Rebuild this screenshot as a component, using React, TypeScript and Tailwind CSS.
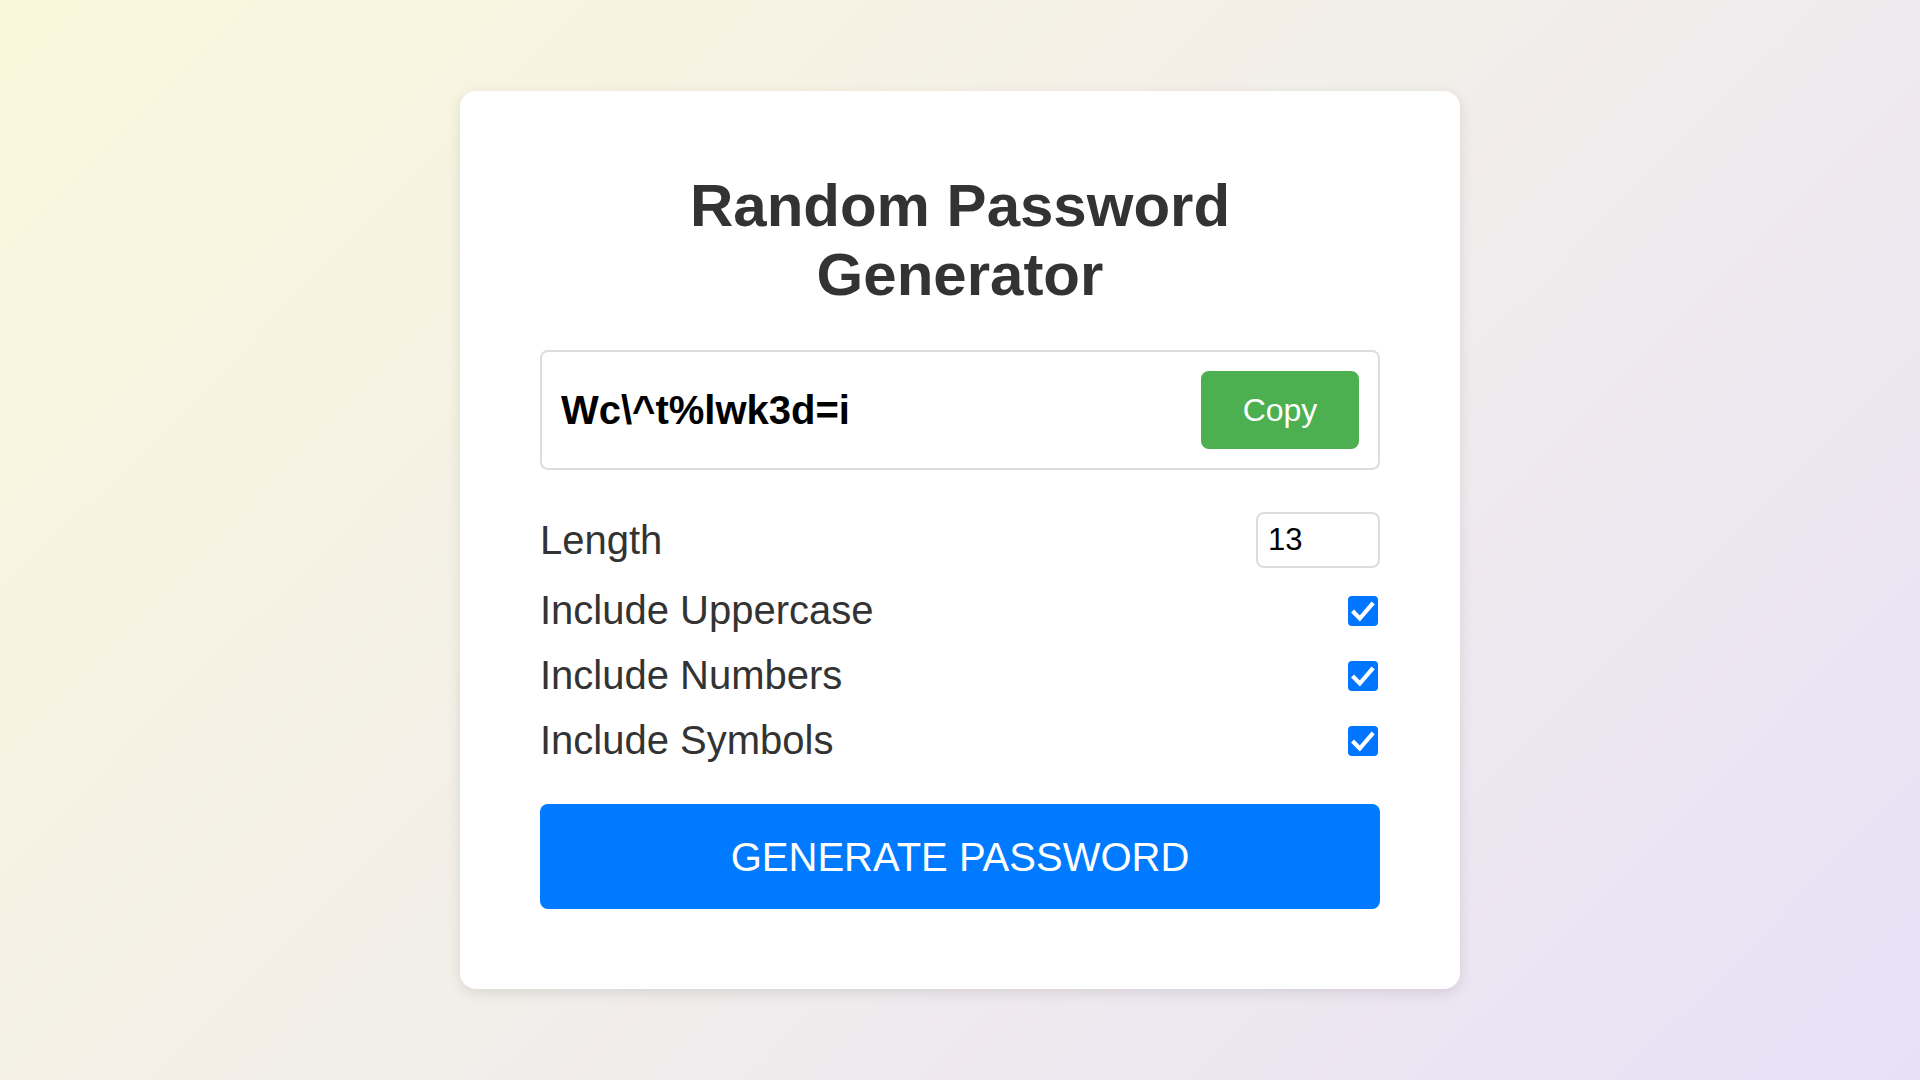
import React from "react";

function Check() {
  return (
    <div className="w-[30px] h-[30px] mr-[2px] rounded-[4px] bg-[#0075ff] flex items-center justify-center">
      <svg width="30" height="30" viewBox="0 0 30 30">
        <path d="M6 16.5 L11.8 22.5 L23.8 8.5" fill="none" stroke="#ffffff" strokeWidth="4.2" strokeLinecap="square" strokeLinejoin="miter" />
      </svg>
    </div>
  );
}

export default function App() {
  const font = { fontFamily: '"Liberation Sans", Arial, sans-serif' };
  return (
    <div
      className="min-h-screen w-full flex items-center justify-center bg-[linear-gradient(135deg,#faf8dc_0%,#f2eeea_50%,#e8e0f7_100%)]"
      style={font}
    >
      <div className="w-[1000px] bg-white rounded-2xl shadow-[0_4px_14px_rgba(0,0,0,0.1)] p-[80px] flex flex-col">
        <h1 className="text-[60px] leading-[69px] font-bold text-[#333] text-center m-0">
          Random Password
          <br />
          Generator
        </h1>
        <div className="mt-[41px] h-[120px] border-2 border-[#dddddd] rounded-lg px-[19px] flex items-center justify-between">
          <span className="text-[40px] font-bold text-black leading-none">Wc\^t%lwk3d=i</span>
          <button className="w-[158px] h-[78px] bg-[#4caf50] text-white text-[32px] rounded-lg flex items-center justify-center">
            Copy
          </button>
        </div>
        <div className="mt-[42px] flex flex-col gap-5">
          <div className="flex items-center justify-between h-[56px]">
            <span className="text-[40px] leading-[45px] text-[#333]">Length</span>
            <div className="w-[124px] h-[56px] border-2 border-[#dddddd] rounded-lg flex items-center pl-[10px] text-[31px] text-black">
              13
            </div>
          </div>
          <div className="flex items-center justify-between h-[45px]">
            <span className="text-[40px] leading-[45px] text-[#333]">Include Uppercase</span>
            <Check />
          </div>
          <div className="flex items-center justify-between h-[45px]">
            <span className="text-[40px] leading-[45px] text-[#333]">Include Numbers</span>
            <Check />
          </div>
          <div className="flex items-center justify-between h-[45px]">
            <span className="text-[40px] leading-[45px] text-[#333]">Include Symbols</span>
            <Check />
          </div>
        </div>
        <button className="mt-[41px] h-[105px] w-full bg-[#007bff] text-white text-[40px] rounded-lg flex items-center justify-center">
          GENERATE PASSWORD
        </button>
      </div>
    </div>
  );
}
